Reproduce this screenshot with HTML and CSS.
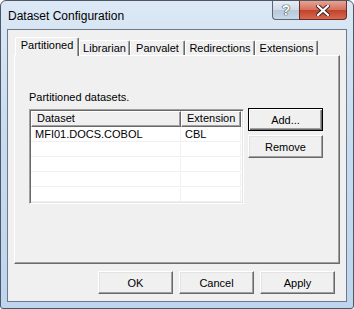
FILE: index.html
```html
<!DOCTYPE html>
<html lang="en">
<head>
    <meta charset="UTF-8">
    <title>Dataset Configuration</title>
    <link rel="stylesheet" href="styles.css">
</head>
<body>
    <div class="window">
        <div class="titlebar">
            <span class="title">Dataset Configuration</span>
            <div class="caption-buttons">
                <div class="cap-btn help-btn">?</div>
                <div class="cap-btn close-btn">
                    <svg width="14" height="11" viewBox="0 0 14 11">
                        <path d="M2 1 L12 10 M12 1 L2 10" stroke="#3a2020" stroke-width="4" stroke-linecap="square"/>
                        <path d="M2 1 L12 10 M12 1 L2 10" stroke="#ffffff" stroke-width="2.2" stroke-linecap="square"/>
                    </svg>
                </div>
            </div>
        </div>

        <div class="client">
            <div class="tab-strip">
                <div class="tab active">Partitioned</div>
                <div class="tab" style="width: 51px">Librarian</div>
                <div class="tab" style="width: 55px">Panvalet</div>
                <div class="tab" style="width: 70px">Redirections</div>
                <div class="tab" style="width: 63px">Extensions</div>
            </div>
            <div class="panel">
                <p class="panel-label">Partitioned datasets.</p>
                <div class="panel-row">
                    <div class="listview">
                        <div class="lv-header">
                            <div class="lv-col col-dataset">Dataset</div>
                            <div class="lv-col col-ext">Extension</div>
                        </div>
                        <div class="lv-body">
                            <div class="lv-row">
                                <div class="lv-cell col-dataset">MFI01.DOCS.COBOL</div>
                                <div class="lv-cell col-ext">CBL</div>
                            </div>
                            <div class="lv-row"><div class="lv-cell col-dataset"></div><div class="lv-cell col-ext"></div></div>
                            <div class="lv-row"><div class="lv-cell col-dataset"></div><div class="lv-cell col-ext"></div></div>
                            <div class="lv-row"><div class="lv-cell col-dataset"></div><div class="lv-cell col-ext"></div></div>
                            <div class="lv-row"><div class="lv-cell col-dataset"></div><div class="lv-cell col-ext"></div></div>
                        </div>
                    </div>
                    <div class="side-buttons">
                        <button class="btn default">Add...</button>
                        <button class="btn">Remove</button>
                    </div>
                </div>
            </div>
            <div class="dialog-buttons">
                <button class="btn">OK</button>
                <button class="btn">Cancel</button>
                <button class="btn">Apply</button>
            </div>
        </div>
    </div>
</body>
</html>
```

FILE: styles.css
```css
body {
    margin: 0;
    background-color: #ffffff;
    font-family: "Liberation Sans", Arial, sans-serif;
    font-size: 11px;
    color: #000000;
}

.window {
    width: 354px;
    height: 309px;
    box-sizing: border-box;
    border: 1px solid #4d5866;
    border-radius: 6px 6px 3px 3px;
    background: linear-gradient(#dce8f5, #c9dcf0 40%, #bed5ee);
    padding: 0 6px 6px 6px;
    display: flex;
    flex-direction: column;
}

.titlebar {
    height: 28px;
    display: flex;
    align-items: flex-start;
}

.title {
    padding-top: 8px;
    padding-left: 1px;
    font-size: 12px;
    line-height: 15px;
    color: #000000;
}

.caption-buttons {
    margin-left: auto;
    display: flex;
}

.cap-btn {
    height: 18px;
    border: 1px solid #5a6676;
    border-top: none;
    display: flex;
    align-items: center;
    justify-content: center;
}

.help-btn {
    width: 26px;
    border-right: none;
    border-radius: 0 0 0 4px;
    background: linear-gradient(#e6edf5, #cfdbe8 50%, #b9c9da 51%, #c9d7e6);
    color: #ffffff;
    font-size: 14px;
    font-weight: bold;
    text-shadow: 0 0 1px #2c3a4c, 0 0 1px #2c3a4c, 0 0 1px #2c3a4c;
}

.close-btn {
    width: 46px;
    border-radius: 0 0 4px 0;
    border-color: #6b2a22;
    background: linear-gradient(#e8a393, #d36f5c 50%, #c2412a 51%, #d46a4f);
}

.client {
    flex: 1;
    border: 1px solid #6c7a8c;
    background-color: #f0f0f0;
    display: flex;
    flex-direction: column;
}

.tab-strip {
    display: flex;
    align-items: flex-end;
    margin: 7px 0 0 7px;
    height: 18px;
    position: relative;
    z-index: 1;
}

.tab {
    height: 15px;
    box-sizing: border-box;
    border-top: 1px solid #ffffff;
    border-left: 1px solid #ffffff;
    border-right: 1px solid #696969;
    box-shadow: inset -1px 0 0 #a0a0a0;
    border-radius: 2px 2px 0 0;
    text-align: center;
    line-height: 14px;
    background-color: #f0f0f0;
}

.tab.active {
    width: 64px;
    height: 19px;
    margin-bottom: -1px;
    line-height: 15px;
    padding-bottom: 3px;
}

.panel {
    margin-left: 6px;
    width: 326px;
    height: 209px;
    box-sizing: border-box;
    border-top: 1px solid #ffffff;
    border-left: 1px solid #ffffff;
    border-right: 1px solid #696969;
    border-bottom: 1px solid #696969;
    box-shadow: inset -1px -1px 0 #a0a0a0;
    padding: 34px 0 0 14px;
}

.panel-label {
    margin: 0;
    line-height: 14px;
}

.panel-row {
    display: flex;
    margin-top: 5px;
}

.listview {
    width: 215px;
    height: 95px;
    box-sizing: border-box;
    border-top: 1px solid #a0a0a0;
    border-left: 1px solid #a0a0a0;
    border-right: 1px solid #ffffff;
    border-bottom: 1px solid #ffffff;
    box-shadow: inset 1px 1px 0 #696969, inset -1px -1px 0 #e3e3e3;
    padding: 1px;
    background-color: #ffffff;
    overflow: hidden;
}

.lv-header {
    display: flex;
    height: 16px;
}

.lv-col {
    box-sizing: border-box;
    height: 16px;
    background-color: #f0f0f0;
    border-top: 1px solid #ffffff;
    border-left: 1px solid #ffffff;
    border-right: 1px solid #696969;
    border-bottom: 1px solid #696969;
    box-shadow: inset -1px -1px 0 #a0a0a0;
    padding-left: 5px;
    line-height: 13px;
}

.col-dataset {
    width: 150px;
}

.col-ext {
    width: 60px;
}

.lv-row {
    display: flex;
    height: 14px;
    margin-top: 1px;
}

.lv-row:first-child {
    margin-top: 0;
    height: 15px;
}

.lv-cell {
    box-sizing: border-box;
    border-bottom: 1px solid #f0f0f0;
    border-right: 1px solid #f0f0f0;
    padding-left: 4px;
    line-height: 14px;
}

.side-buttons {
    display: flex;
    flex-direction: column;
    gap: 4px;
    margin-left: 4px;
    margin-top: -1px;
}

.btn {
    width: 75px;
    height: 23px;
    box-sizing: border-box;
    font-family: "Liberation Sans", Arial, sans-serif;
    font-size: 11px;
    color: #000000;
    background-color: #f0f0f0;
    border-top: 1px solid #ffffff;
    border-left: 1px solid #ffffff;
    border-right: 1px solid #696969;
    border-bottom: 1px solid #696969;
    box-shadow: inset -1px -1px 0 #a0a0a0, inset 1px 1px 0 #e3e3e3;
    padding: 0;
    border-radius: 0;
}

.btn.default {
    border: 1px solid #000000;
    box-shadow: inset 1px 1px 0 #ffffff, inset -1px -1px 0 #696969, inset -2px -2px 0 #a0a0a0;
}

.dialog-buttons {
    display: flex;
    justify-content: flex-end;
    gap: 6px;
    margin-top: 7px;
    padding-right: 11px;
}
```
